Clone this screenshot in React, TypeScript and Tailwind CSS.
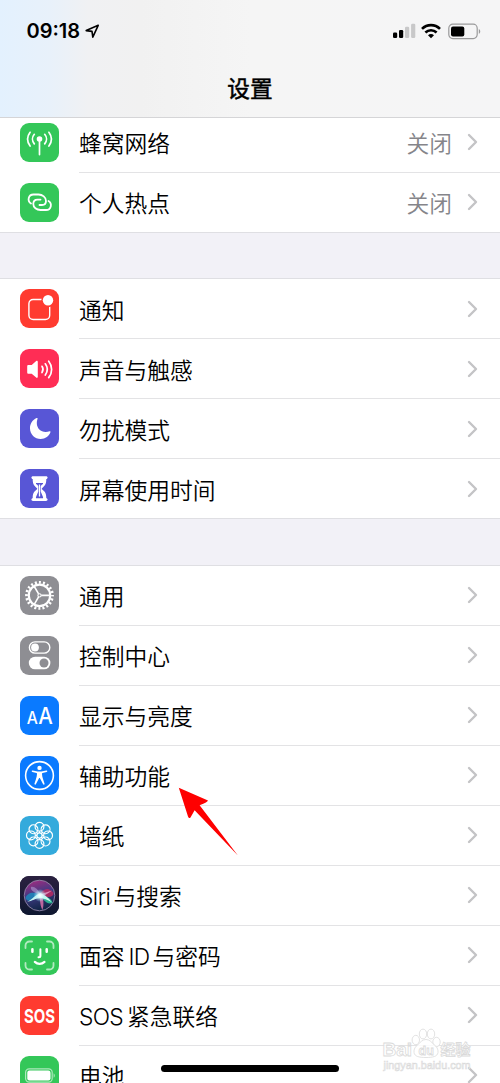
import type { ReactNode } from "react";

type Row = {
  label: ReactNode;
  value?: string;
  color: string;
  icon: ReactNode;
};

const PETALS = [0, 45, 90, 135, 180, 225, 270, 315];

function Cellular() {
  return (
    <g fill="none" stroke="#fff" strokeWidth="1.7" strokeLinecap="round">
      <circle cx="19.5" cy="16" r="2.8" fill="#fff" stroke="none" />
      <path d="M19.5 17v14.6" />
      <path d="M14.3 11.3c-2.4 2.8-2.4 6.8 0 9.6M24.7 11.3c2.4 2.8 2.4 6.8 0 9.6" />
      <path d="M10.1 9.3c-3.2 4.3-3.2 9.5 0 13.7M28.9 9.3c3.2 4.3 3.2 9.5 0 13.7" />
    </g>
  );
}

function Hotspot() {
  return (
    <g fill="none" stroke="#fff" strokeWidth="1.8" strokeLinecap="round">
      <path d="M11 20.6C7 18 8.2 11.5 13.5 11.5H18.5C22.5 11.5 26 14.5 26 18C26 20.5 24.5 22 22 22H19.5" />
      <path d="M28.5 18C32.5 20.5 31.3 27 26 27H20.5C16.5 27 13.3 24.5 13.3 21C13.3 18.3 15 16.6 17.5 16.6H20.5" />
    </g>
  );
}

function Notifications() {
  return (
    <g>
      <rect x="8.9" y="10.5" width="20.8" height="20" rx="4.2" fill="none" stroke="#fff" strokeWidth="1.4" />
      <circle cx="28" cy="11.5" r="6.7" fill="#ff3b30" />
      <circle cx="28" cy="11.3" r="5.2" fill="#fff" />
    </g>
  );
}

function Sound() {
  return (
    <g>
      <path
        d="M8.5 15.9h3.2l4.5-3.8c.7-.6 1.6-.2 1.6.8v14.9c0 1-.9 1.4-1.6.8l-4.5-3.9H8.5c-.8 0-1.3-.5-1.3-1.3v-6.2c0-.8.5-1.3 1.3-1.3z"
        fill="#fff"
      />
      <g fill="none" stroke="#fff" strokeWidth="1.7" strokeLinecap="round">
        <path d="M22 17.3c1.3 1.9 1.3 4.3 0 6.2" />
        <path d="M25.3 14.8c2.5 3.4 2.5 7.8 0 11.2" />
        <path d="M28.7 12.2c3.9 4.9 3.9 11.5 0 16.4" />
      </g>
    </g>
  );
}

function Moon() {
  return (
    <path
      d="M16.6 9.1C12.6 11 10 14.7 10 19.3C10 25.4 14.8 30 20.7 30C25.3 30 29.2 27.2 30.5 23.1C30.7 22.4 30.2 22 29.6 22.3C28.4 22.8 27 23 25.7 23C20.6 23 16.8 19.2 16.8 14C16.8 12.6 17 11.2 17.5 10C17.8 9.3 17.3 8.8 16.6 9.1z"
      fill="#fff"
    />
  );
}

function Hourglass() {
  return (
    <g>
      <path
        d="M13 7.2h13c1 0 1.6.6 1.6 1.4s-.6 1.5-1.3 1.5c0 5-1 6.2-4 8.8-.7.6-.7 1 0 1.6 3 2.5 4 4 4 8.7.7 0 1.3.6 1.3 1.4S27 32 26 32H13c-1 0-1.6-.6-1.6-1.4s.6-1.4 1.3-1.4c0-4.7 1-6.2 4-8.7.7-.6.7-1 0-1.6-3-2.6-4-3.8-4-8.8-.7 0-1.3-.7-1.3-1.5S12 7.2 13 7.2z"
        fill="#fff"
      />
      <path d="M16 14.6h7M16 28.7h7" stroke="#5856d6" strokeWidth="1.2" />
      <path d="M16.2 14.3h6.6l-2.1 2.9v5.3l2.5 6h-7.4l2.5-6v-5.3z" fill="#5856d6" />
      <path d="M19.5 15.6v12" stroke="#fff" strokeWidth="1.3" />
    </g>
  );
}

function Gear() {
  return (
    <g fill="none" stroke="#fff">
      <circle cx="19.5" cy="19.4" r="13" strokeWidth="2.8" strokeDasharray="2 2.084" strokeDashoffset="1" />
      <circle cx="19.5" cy="19.4" r="10.7" strokeWidth="2.2" />
      <circle cx="19.5" cy="19.4" r="1.6" strokeWidth="1.1" />
      <path d="M21.2 19.4h8.5M18.6 17.9l-4.3-7.4M18.6 20.9l-4.3 7.4" strokeWidth="1.6" />
    </g>
  );
}

function Toggles() {
  return (
    <g>
      <rect x="9.4" y="5.9" width="20.4" height="11.2" rx="5.6" fill="none" stroke="#fff" strokeWidth="1.4" />
      <circle cx="15" cy="11.5" r="3.9" fill="#fff" />
      <rect x="8.8" y="20.7" width="21.6" height="12.6" rx="6.3" fill="#fff" />
      <circle cx="24" cy="27" r="4.5" fill="#8e8e93" />
    </g>
  );
}

function TextSize() {
  return (
    <g fill="#fff" className="font-['Inter',sans-serif] font-medium">
      <text transform="translate(6.8 27.6) scale(.92 1)" fontSize="17">A</text>
      <text transform="translate(18.2 27.6) scale(.9 1)" fontSize="22.8">A</text>
    </g>
  );
}

function Accessibility() {
  return (
    <g>
      <circle cx="19.5" cy="19.5" r="13.9" fill="none" stroke="#fff" strokeWidth="1.6" />
      <circle cx="19.5" cy="11.9" r="2.2" fill="#fff" />
      <path
        d="M12.7 14.5l5 .9c1.2.2 2.4.2 3.6 0l5-.9c1.2-.2 1.4 1.1.4 1.4l-4.2 1.2c-.4.1-.5.4-.5.8.1 1.7.4 3.4 1 5l1.5 4.6c.4 1.2-1 1.7-1.5.6l-2.9-5.7c-.3-.6-.9-.6-1.2 0L16 28.1c-.5 1.1-1.9.6-1.5-.6l1.5-4.6c.6-1.6.9-3.3 1-5 0-.4-.1-.7-.5-.8l-4.2-1.2c-1-.3-.8-1.6.4-1.4z"
        fill="#fff"
      />
    </g>
  );
}

function Flower() {
  return (
    <g fill="none" stroke="#fff" strokeWidth="1.2">
      {PETALS.map((a) => (
        <circle key={a} cx="19.5" cy="10.8" r="4.4" transform={`rotate(${a} 19.5 19.4)`} />
      ))}
      <circle cx="19.5" cy="19.4" r="2.6" />
      {PETALS.map((a) => (
        <path key={a} d="M19.5 16.9v-1.7" transform={`rotate(${a} 19.5 19.4)`} />
      ))}
    </g>
  );
}

function Siri() {
  return (
    <g>
      <defs>
        <linearGradient id="siriBg" x1="0" y1="0" x2="0" y2="1">
          <stop offset="0" stopColor="#2b2140" />
          <stop offset="1" stopColor="#0e1730" />
        </linearGradient>
        <linearGradient id="siriOrb" x1="0.3" y1="0" x2="0.6" y2="1">
          <stop offset="0" stopColor="#a02c80" />
          <stop offset="0.45" stopColor="#3f3a83" />
          <stop offset="1" stopColor="#0c2340" />
        </linearGradient>
        <radialGradient id="siriGlow">
          <stop offset="0" stopColor="#fff" />
          <stop offset="0.35" stopColor="#dff" stopOpacity="0.8" />
          <stop offset="1" stopColor="#9ef" stopOpacity="0" />
        </radialGradient>
      </defs>
      <rect width="39" height="39" fill="url(#siriBg)" />
      <circle cx="19.5" cy="19.5" r="15.3" fill="url(#siriOrb)" stroke="#9286a8" strokeWidth="0.9" />
      <path d="M20 19C23 12 29 11 33.5 17C34 22 25 22 20 19z" fill="#c9285f" opacity=".75" />
      <path d="M20 18.5C13 15 7 17 5.5 22C7 27 14 25 20 18.5z" fill="#1c8fc0" opacity=".8" />
      <path d="M20 18C14 17 10 14 11 11C14 10 18 13 20 18z" fill="#a68ac8" opacity=".7" />
      <path d="M20.5 18C25 20 32 22 32.5 27C27 29 23 24 20.5 18z" fill="#2fc79b" opacity=".85" />
      <path d="M19 18C20.5 23 19.5 29 22.5 34C24.5 28 23 22 21.5 18z" fill="#d870a8" opacity=".85" />
      <path d="M7 26C12 23.5 16 18.5 20.5 17.3C24 18.5 28 21 31.5 26C27 24 24 22.3 20.5 22C16 22 12 25 7 26z" fill="#d9fff9" opacity=".9" />
      <path d="M19.5 18.5L32 14.5C29 17 25 19.5 21 20.5z" fill="#f6c6e8" opacity=".6" />
      <circle cx="20" cy="19.5" r="6.5" fill="url(#siriGlow)" />
    </g>
  );
}

function FaceId() {
  return (
    <g fill="none" stroke="#fff" strokeLinecap="round">
      <g strokeWidth="1.8" opacity=".62">
        <path d="M5.5 12V9.5a4 4 0 0 1 4-4H12" />
        <path d="M27 5.5h2.5a4 4 0 0 1 4 4V12" />
        <path d="M33.5 27v2.5a4 4 0 0 1-4 4H27" />
        <path d="M12 33.5H9.5a4 4 0 0 1-4-4V27" />
      </g>
      <path d="M12.4 13.2v2.6M26.7 13.2v2.6" strokeWidth="2.5" />
      <path d="M20.4 13.2v6.6c0 1-.6 1.5-1.5 1.5h-.4" strokeWidth="2" />
      <path d="M14.8 25.9c2.8 2.7 6.9 2.7 9.7 0" strokeWidth="2.2" />
    </g>
  );
}

function Sos() {
  return (
    <text
      transform="translate(3.9 26.5) scale(.77 1)"
      fill="#fff"
      fontSize="19.4"
      className="font-['Inter',sans-serif] font-bold"
    >
      SOS
    </text>
  );
}

function Battery() {
  return (
    <g>
      <rect x="5.6" y="12.8" width="26.6" height="13.4" rx="3.6" fill="none" stroke="#fff" strokeOpacity=".6" strokeWidth="1.2" />
      <rect x="7.3" y="14.5" width="23.2" height="10" rx="2.2" fill="#fff" />
      <path d="M33.6 17.2c1.6.7 1.6 3.9 0 4.6z" fill="#fff" fillOpacity=".6" />
    </g>
  );
}

const GROUPS: Row[][] = [
  [
    { label: "蜂窝网络", value: "关闭", color: "bg-[#34c759]", icon: <Cellular /> },
    { label: "个人热点", value: "关闭", color: "bg-[#34c759]", icon: <Hotspot /> },
  ],
  [
    { label: "通知", color: "bg-[#ff3b30]", icon: <Notifications /> },
    { label: "声音与触感", color: "bg-[#ff2d55]", icon: <Sound /> },
    { label: "勿扰模式", color: "bg-[#5856d6]", icon: <Moon /> },
    { label: "屏幕使用时间", color: "bg-[#5856d6]", icon: <Hourglass /> },
  ],
  [
    { label: "通用", color: "bg-[#8e8e93]", icon: <Gear /> },
    { label: "控制中心", color: "bg-[#8e8e93]", icon: <Toggles /> },
    { label: "显示与亮度", color: "bg-[#0a7aff]", icon: <TextSize /> },
    { label: "辅助功能", color: "bg-[#0a7aff]", icon: <Accessibility /> },
    { label: "墙纸", color: "bg-[#34aadc]", icon: <Flower /> },
    {
      label: (
        <>
          <span className="mr-[3px] tracking-[-0.5px]">Siri</span>与搜索
        </>
      ),
      color: "bg-[#1c1b35]",
      icon: <Siri />,
    },
    {
      label: (
        <>
          面容<span className="mr-[3px] ml-[4px] tracking-[-0.7px]">ID</span>与密码
        </>
      ),
      color: "bg-[#34c759]",
      icon: <FaceId />,
    },
    {
      label: (
        <>
          <span className="mr-[4px] tracking-[-0.7px]">SOS</span>紧急联络
        </>
      ),
      color: "bg-[#ff3b30]",
      icon: <Sos />,
    },
    { label: "电池", color: "bg-[#34c759]", icon: <Battery /> },
  ],
];

function SettingsRow({ row, last }: { row: Row; last: boolean }) {
  return (
    <li className={`flex h-[60px] pl-5 ${last ? "border-b border-[#dfdfe3]" : ""}`}>
      <span className={`mt-2.5 h-[39px] w-[39px] shrink-0 overflow-hidden rounded-[9px] ${row.color}`}>
        <svg width="39" height="39" viewBox="0 0 39 39">
          {row.icon}
        </svg>
      </span>
      <div className={`ml-5 flex flex-1 items-center pr-[22px] font-[350] ${last ? "" : "border-b border-[#e3e3e5]"}`}>
        <span className="flex-1 pt-[4.5px] text-[22.75px] leading-none whitespace-nowrap text-black">{row.label}</span>
        {row.value && <span className="mr-[15px] pt-[4px] text-[22.75px] leading-none text-[#85858a]">{row.value}</span>}
        <svg width="11" height="18" viewBox="0 0 11 18" fill="none" stroke="#c4c4c6" strokeWidth="2.4" strokeLinecap="round" strokeLinejoin="round">
          <path d="M2 2l7 7-7 7" />
        </svg>
      </div>
    </li>
  );
}

function StatusBar() {
  return (
    <div className="flex h-[62px] items-center pr-[19px] pl-[26.5px]">
      <span className="text-[20px] leading-none font-semibold">09:18</span>
      <svg className="ml-[5px]" width="15" height="15" viewBox="0 0 15 15" fill="none" stroke="#000" strokeWidth="1.6" strokeLinejoin="round">
        <path d="M13.2 1.3L1.2 6.6l5.8.8.8 5.8z" />
      </svg>
      <svg className="ml-auto" width="24" height="16" viewBox="0 0 24 16">
        <rect y="9.5" width="4.2" height="5.5" rx="1.3" />
        <rect x="6" y="7" width="4.2" height="8" rx="1.3" />
        <rect x="12" y="3.8" width="4.2" height="11.2" rx="1.3" fill="#c8c8c9" />
        <rect x="18.1" y="0.8" width="4.2" height="14.2" rx="1.3" fill="#c8c8c9" />
      </svg>
      <svg className="mr-px ml-1" width="20" height="16" viewBox="0 0 20 16" fill="none" stroke="#000" strokeWidth="2.6">
        <path d="M1 5.9C6 .9 14 .9 19 5.9" />
        <path d="M4.4 9.5C7.5 6.5 12.5 6.5 15.6 9.5" />
        <path d="M10 15.2L7 12.2C8.7 10.7 11.3 10.7 13 12.2z" fill="#000" stroke="none" />
      </svg>
      <svg className="ml-[6px]" width="33" height="17" viewBox="0 0 33 17">
        <rect x="0.8" y="1.2" width="28.4" height="14.4" rx="4" fill="none" stroke="#9a9a9b" strokeWidth="1.2" />
        <rect x="3" y="3.4" width="13.3" height="10" rx="2" />
        <path d="M30.8 6c1.9.8 1.9 4 0 4.8z" fill="#9a9a9b" />
      </svg>
    </div>
  );
}

function Watermark() {
  return (
    <svg
      className="absolute top-[1027px] left-[382px] font-['Liberation_Sans','Noto_Sans_CJK_SC',sans-serif] font-bold"
      width="94"
      height="46"
      viewBox="0 0 94 46"
      fill="#fff"
      fillOpacity=".8"
      stroke="#dadada"
      strokeWidth="0.8"
    >
      <ellipse cx="33.8" cy="13" rx="3.7" ry="4.7" />
      <ellipse cx="41" cy="7" rx="3.7" ry="4.9" />
      <ellipse cx="49" cy="7" rx="3.7" ry="4.9" />
      <ellipse cx="54.5" cy="15" rx="3.7" ry="4.7" />
      <path d="M44 12.5c4 0 5.500 3 8 5s4.500 4.500 4 8c-.6 4-5 5-12 5s-11.400-1-12-5c-.5-3.500 1.500-6 4-8s4-5 8-5z" />
      <text x=".5" y="29" fontSize="19">Bai</text>
      <text x="36.5" y="27.5" fontSize="12.5">du</text>
      <text x="58.5" y="28" fontSize="15">经验</text>
      <text x="1.5" y="41.5" fontSize="10.8" fontWeight="400" strokeWidth="0.6">jingyan.baidu.com</text>
    </svg>
  );
}

export default function App() {
  return (
    <div className="relative h-[1083px] w-[500px] overflow-hidden bg-[#f2f1f7] font-['Inter','Noto_Sans_CJK_SC',sans-serif] text-black">
      <header className="relative z-10 h-[118px] border-b border-[#d5d5d7] bg-[linear-gradient(90deg,#e3f1fe_0px,#e8f1fa_50px,#f0f1f3_88px,#f1f1f1_140px,#f5f5f5_250px,#f5f5f6_500px)]">
        <StatusBar />
        <h1 className="pt-[16px] text-center text-[22.67px] leading-none font-normal [-webkit-text-stroke:0.5px_#000]">设置</h1>
      </header>

      <main className="-mt-[5.33px] flex flex-col gap-[46.67px]">
        {GROUPS.map((rows, i) => (
          <ul key={i} className="bg-white shadow-[0_-1px_0_#dfdfe3]">
            {rows.map((row, j) => (
              <SettingsRow key={j} row={row} last={j === rows.length - 1} />
            ))}
          </ul>
        ))}
      </main>

      <svg className="absolute top-[786px] left-[177px]" width="64" height="72" viewBox="0 0 64 72">
        <path d="M1.8 1.8L31 14.5Q31 16 22.6 19.3L60.9 69.6L17.6 24.3L13.5 31.5Q12 33 11 30.5z" fill="#fe0000" />
      </svg>
      <Watermark />
      <div className="absolute top-[1065px] left-[161px] h-[7px] w-[178px] rounded-full bg-black" />
    </div>
  );
}
